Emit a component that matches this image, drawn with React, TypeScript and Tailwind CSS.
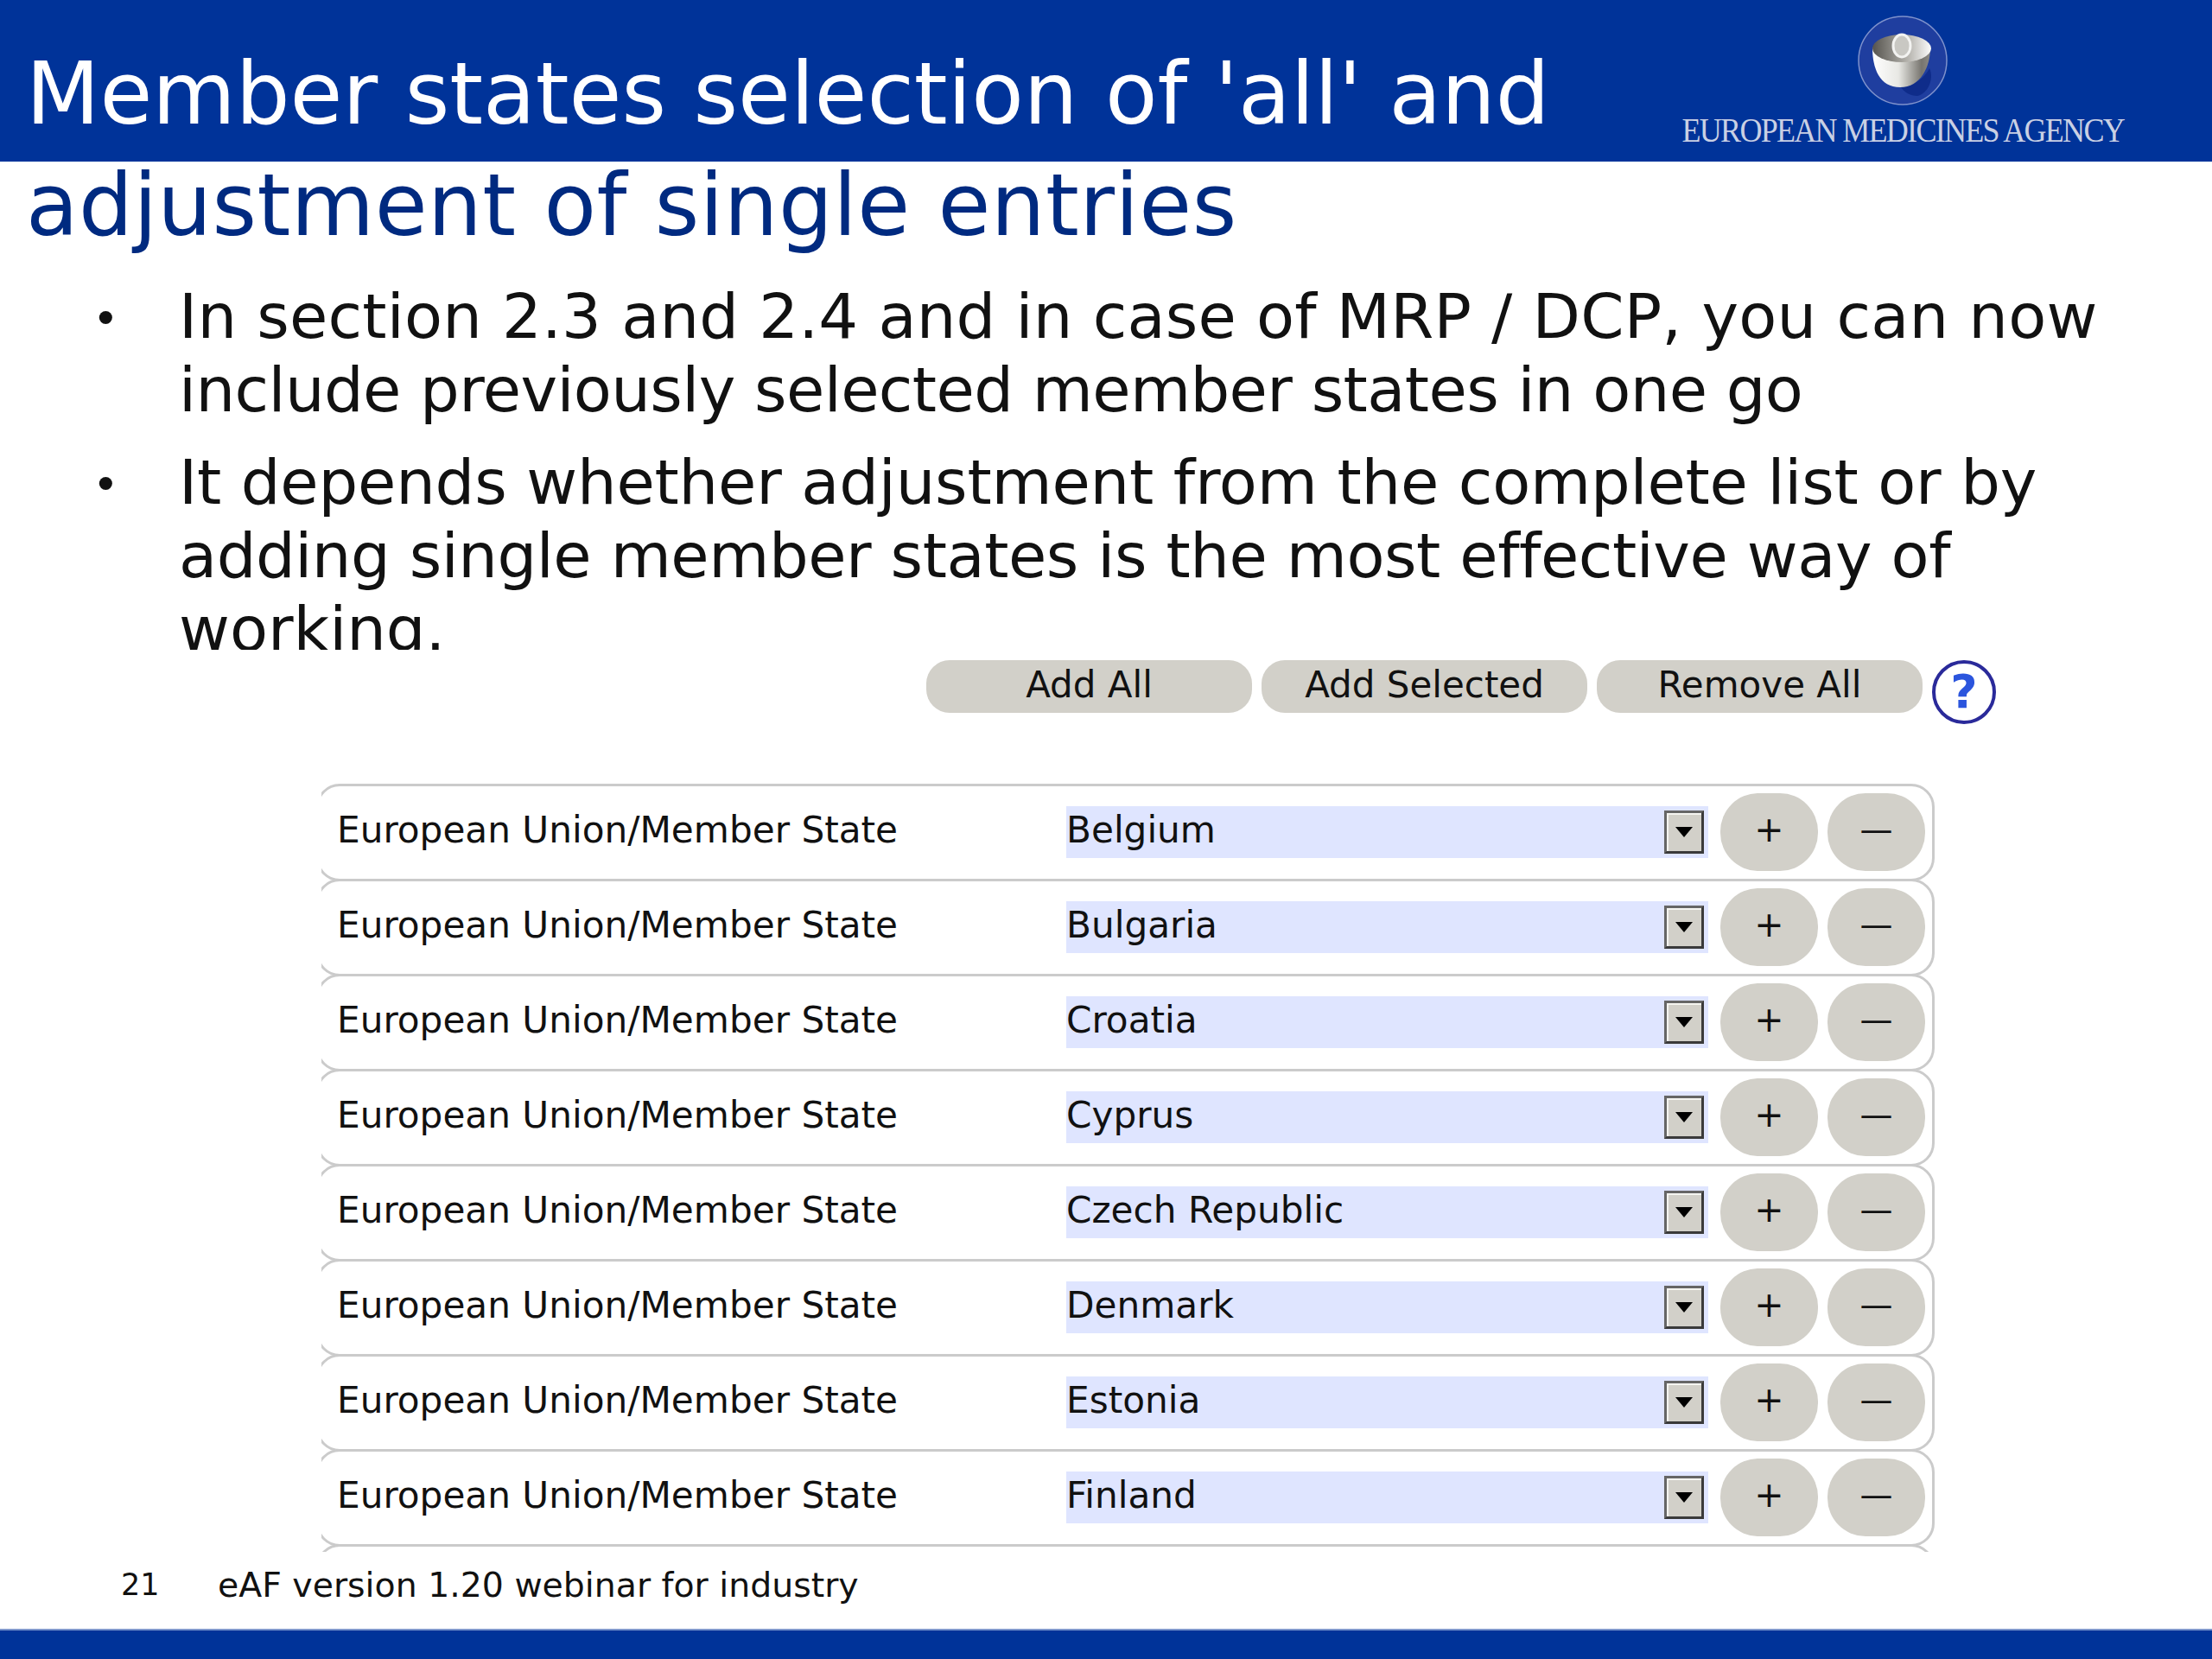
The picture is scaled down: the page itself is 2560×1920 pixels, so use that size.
const states = ["Belgium", "Bulgaria", "Croatia", "Cyprus", "Czech Republic", "Denmark", "Estonia", "Finland"];

function AgencyLogo() {
    return (
        <div className="flex flex-col items-center">
            <svg width="106" height="106" viewBox="0 0 106 106" aria-hidden="true">
                <defs>
                    <linearGradient id="bowl" x1="0" x2="1" y1="0" y2="0">
                        <stop offset="0" stopColor="#ffffff"/>
                        <stop offset="0.45" stopColor="#e8e8e4"/>
                        <stop offset="0.85" stopColor="#77756f"/>
                        <stop offset="1" stopColor="#8c8a86"/>
                    </linearGradient>
                    <linearGradient id="inside" x1="0" x2="1" y1="0" y2="0">
                        <stop offset="0" stopColor="#55534e"/>
                        <stop offset="0.6" stopColor="#b5b3ad"/>
                        <stop offset="1" stopColor="#fbfbfb"/>
                    </linearGradient>
                </defs>
                <circle cx="53" cy="53" r="51" fill="#1f3e9f" stroke="#7f92cc" strokeWidth="1.5"/>
                <path d="M50 82 C64 84 78 74 84 62 C90 74 82 92 70 94 C62 94 54 90 50 82 Z" fill="#0f2c8a"/>
                <path d="M18 38 C18 62 26 84 50 84 C74 84 85 60 85 38 Z" fill="url(#bowl)"/>
                <ellipse cx="52" cy="39" rx="34" ry="16" fill="url(#inside)"/>
                <ellipse cx="52" cy="36" rx="10" ry="13" fill="#c9c8c3" stroke="#f3f3f1" strokeWidth="3"/>
            </svg>
            <span className="mt-[10px] scale-y-110 font-['Liberation_Serif',serif] text-[36px] leading-[36px] tracking-[-1.7px] text-[#c9d0e4] whitespace-nowrap">
                EUROPEAN MEDICINES AGENCY
            </span>
        </div>
    );
}

function StateRow({name}: {name?: string}) {
    return (
        <div className="-ml-[6px] flex h-[113px] items-center rounded-[27px] border-[3px] border-[#cbcbcb] pb-[2px] pl-[21px] pr-[8px] -mt-[3px] first:mt-0">
            <span className="w-[844px] shrink-0 text-[42.2px] leading-[50px] text-[#111] whitespace-nowrap -mt-[3px]">
                European Union/Member State
            </span>
            <div className="flex h-[60px] w-[743px] shrink-0 items-center justify-between bg-[#dfe5ff] pr-[5px]">
                <span className="text-[42.2px] leading-[50px] text-[#111] -mt-[3px]">{name}</span>
                <div className="flex h-[50px] w-[46px] items-center justify-center border-[3px] border-[#666] border-r-[#3a3a3a] border-b-[#3a3a3a] bg-[#d2d0c9] shadow-[inset_2px_2px_0_#f4f4f0]">
                    <svg width="22" height="14" viewBox="0 0 22 14" aria-hidden="true">
                        <path d="M1 1 H21 L11 13 Z" fill="#000"/>
                    </svg>
                </div>
            </div>
            <button className="ml-[14px] flex h-[90px] w-[113px] shrink-0 items-center justify-center rounded-[44px] bg-[#d2d0c9] pb-[4px] text-[41px] leading-none text-[#111]">+</button>
            <button className="ml-[11px] flex h-[90px] w-[113px] shrink-0 items-center justify-center rounded-[44px] bg-[#d2d0c9] pb-[6px] text-[38px] font-medium leading-none text-[#111]">—</button>
        </div>
    );
}

export default function App() {
    return (
        <div className="flex h-[1920px] w-full flex-col overflow-hidden bg-white font-['DejaVu_Sans',sans-serif] text-black">
            <header className="flex h-[187px] shrink-0 items-start justify-between bg-[#003399] pr-[102px] pt-[17px]">
                <h1 className="pl-[30px] pt-[28px] text-[99px] leading-[128px] font-normal whitespace-nowrap">
                    <span className="block text-white">Member states selection of 'all' and</span>
                    <span className="mt-[1px] block tracking-[0.45px] text-[#002a80]">adjustment of single entries</span>
                </h1>
                <AgencyLogo/>
            </header>

            <ul className="mt-[137px] h-[428px] shrink-0 overflow-hidden pl-[107px] text-[72px] leading-[85px] text-[#111]">
                <li className="flex">
                    <span className="w-[100px] shrink-0 pt-[3px] text-[52px]">•</span>
                    <div className="whitespace-nowrap">
                        <span className="block tracking-[0.19px]">In section 2.3 and 2.4 and in case of MRP / DCP, you can now</span>
                        <span className="block tracking-[-0.58px]">include previously selected member states in one go</span>
                    </div>
                </li>
                <li className="mt-[22px] flex">
                    <span className="w-[100px] shrink-0 pt-[3px] text-[52px]">•</span>
                    <div className="whitespace-nowrap">
                        <span className="block tracking-[-0.17px]">It depends whether adjustment from the complete list or by</span>
                        <span className="block tracking-[-0.44px]">adding single member states is the most effective way of</span>
                        <span className="block">working.</span>
                    </div>
                </li>
            </ul>

            <div className="mt-[12px] flex shrink-0 items-start pl-[1072px]">
                {["Add All", "Add Selected", "Remove All"].map((label) => (
                    <button key={label} className="mr-[11px] h-[61px] w-[377px] rounded-[27px] bg-[#d2d0c9] pb-[4px] text-[42px] leading-[50px] text-[#111]">
                        {label}
                    </button>
                ))}
                <div className="flex h-[74px] w-[74px] items-center justify-center rounded-full border-[4px] border-[#2a2a9a] bg-white text-[54px] font-bold leading-none text-[#2b55dd]">?</div>
            </div>

            <div className="ml-[372px] mt-[69px] h-[889px] w-[1867px] shrink-0 overflow-hidden">
                {states.map((name) => (
                    <StateRow key={name} name={name}/>
                ))}
                <StateRow/>
            </div>

            <footer className="mt-[16px] flex pl-[140px] text-[39.4px] leading-[45px] text-[#111]">
                <span className="w-[112px] shrink-0 text-[35px]">21</span>
                <span className="whitespace-nowrap">eAF version 1.20 webinar for industry</span>
            </footer>

            <div className="mt-auto h-[35px] border-t-2 border-[#7f97cc] bg-[#003399]"/>
        </div>
    );
}
